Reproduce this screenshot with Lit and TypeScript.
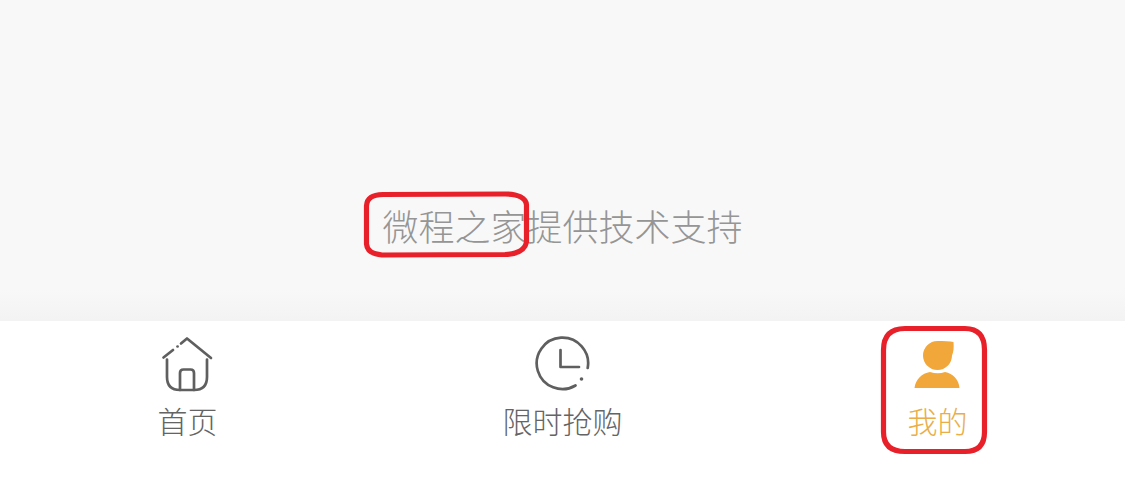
import { LitElement, html, css, svg } from "lit";
import { customElement } from "lit/decorators.js";

const homeIcon = svg`<svg class="icon" width="56" height="56" viewBox="0 0 56 56" fill="none" stroke="#5f5f60" stroke-width="2.7" stroke-linecap="round" stroke-linejoin="round">
  <path d="M3.5 21.5 L13 14"/>
  <path d="M17.5 10.5 L17.6 10.5"/>
  <path d="M21 7.5 L27 2.5 L51 22"/>
  <path d="M7 23.5 V41 Q7 54 20 54 H34 Q47 54 47 41 V23.5"/>
  <path d="M20 54 V37 Q20 33.5 23.5 33.5 H30.5 Q34 33.5 34 37 V54"/>
</svg>`;

const clockIcon = svg`<svg class="icon" width="56" height="56" viewBox="0 0 56 56" fill="none" stroke="#5f5f60" stroke-width="2.7" stroke-linecap="round" stroke-linejoin="round">
  <path d="M40.5 49.5 A25.7 25.7 0 1 1 52.7 32"/>
  <circle cx="46.5" cy="43" r="1.8" fill="#5f5f60" stroke="none"/>
  <path d="M25.5 14 V31 H44"/>
</svg>`;

const userIcon = svg`<svg class="icon" width="56" height="56" viewBox="0 0 56 56" fill="#f2a73b">
  <path d="M27.5 5 C34 5 40 5 43.5 6 C44 12 43.5 16 42 19.5 A14.5 14.5 0 1 1 27.5 5 Z"/>
  <path d="M4.5 52 C5.5 43 12 37.5 20 36 Q28 38.5 35 36 C43 37.5 49 44 49.5 52 Z"/>
</svg>`;

@customElement("app-root")
export class AppRoot extends LitElement {
  static styles = css`
    :host {
      display: block;
      position: relative;
      width: 1125px;
      height: 499px;
      overflow: hidden;
      background: #ffffff;
      font-family: "Noto Sans CJK SC", "Noto Sans", sans-serif;
      font-weight: 300;
    }
    .content {
      height: 321px;
      box-sizing: border-box;
      padding-top: 202px;
      background: linear-gradient(to bottom, #f8f8f8 0, #f8f8f8 290px, #f3f3f3 321px);
      text-align: center;
      font-size: 36px;
      line-height: 46px;
      color: #959595;
    }
    .tabs {
      display: grid;
      grid-template-columns: repeat(3, 1fr);
      height: 178px;
      background: #ffffff;
    }
    .tab {
      display: flex;
      flex-direction: column;
      align-items: center;
      padding-top: 15px;
      color: #646464;
      font-size: 30px;
      line-height: 40px;
    }
    .tab.active {
      color: #e9ae4a;
    }
    .tab .label {
      margin-top: 8px;
    }
    .icon {
      display: block;
    }
    .marks {
      position: absolute;
      left: 0;
      top: 0;
      pointer-events: none;
    }
  `;

  render() {
    return html`
      <div class="content">微程之家提供技术支持</div>
      <nav class="tabs">
        <div class="tab">${homeIcon}<span class="label">首页</span></div>
        <div class="tab">${clockIcon}<span class="label">限时抢购</span></div>
        <div class="tab active">${userIcon}<span class="label">我的</span></div>
      </nav>
      <svg class="marks" width="1125" height="499" viewBox="0 0 1125 499" fill="none" stroke="#e8202a" stroke-width="5.2" stroke-linecap="round" stroke-linejoin="round">
        <path d="M383 194.5 C372 195 367 198 366.5 206 L366.5 244 C367 251 372 254 382 255 L505 254.5 C518 254 525 250 526.5 242 L526.5 205 C526 198 518 194 505 194 Z"/>
        <path d="M905 328.5 H965 Q984.5 328.5 984.5 350 V432 Q984.5 451.5 965 451.5 H905 Q883.5 451.5 883.5 432 V350 Q883.5 328.5 905 328.5 Z"/>
      </svg>
    `;
  }
}
